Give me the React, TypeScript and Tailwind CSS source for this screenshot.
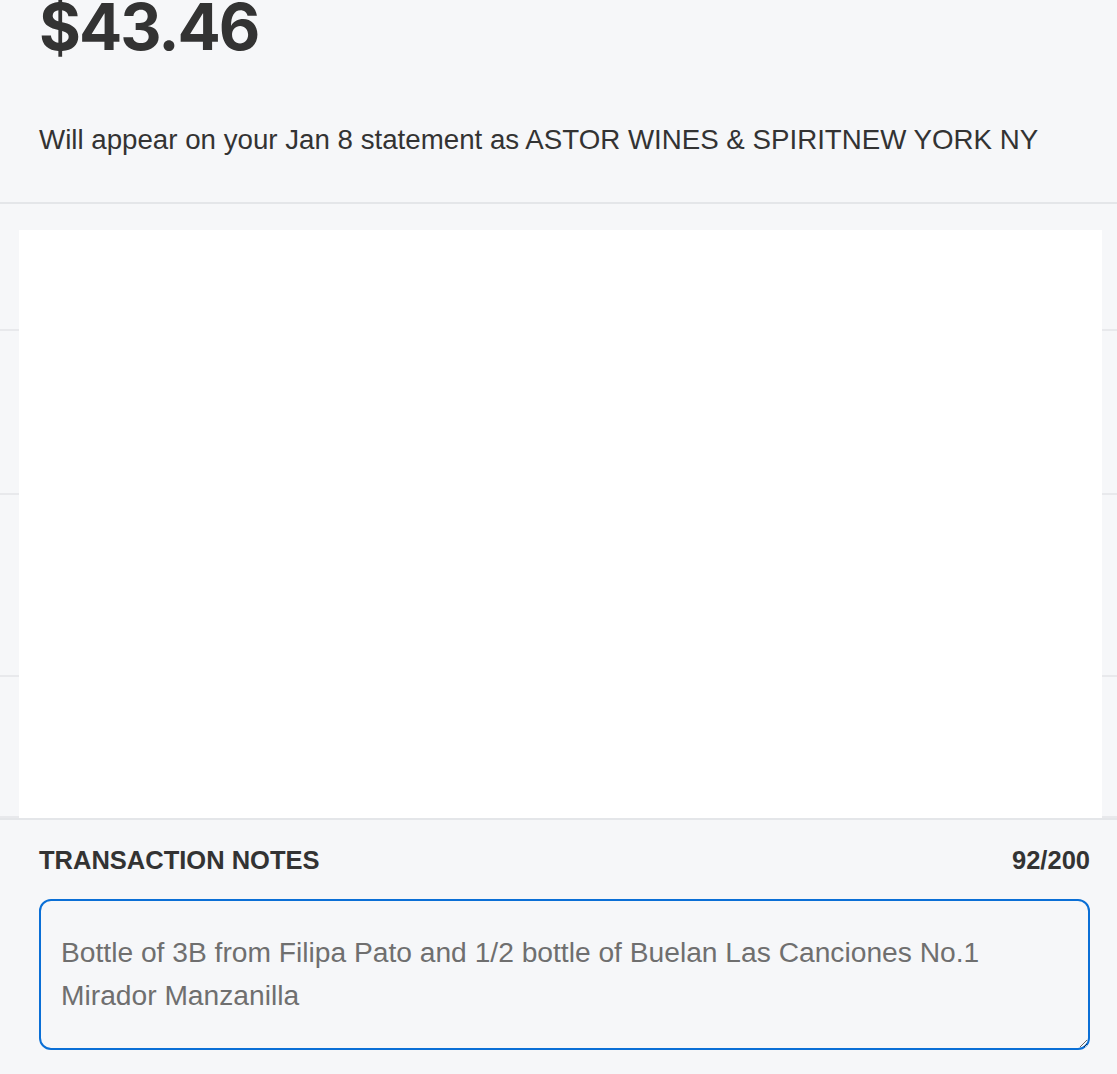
import { useEffect, useRef } from 'react';

const rows = [101, 164, 182, 141];

const App = () => {
  const noteRef = useRef<HTMLTextAreaElement>(null);
  const note = 'Bottle of 3B from Filipa Pato and 1/2 bottle of Buelan Las Canciones No.1 Mirador Manzanilla';

  useEffect(() => {
    const el = noteRef.current;
    if (el) {
      el.focus();
      el.setSelectionRange(note.length, note.length);
    }
  }, []);

  return (
    <div className="min-h-screen bg-[#f6f7f9] text-[#333333] font-['Liberation_Sans',Arial,sans-serif] overflow-hidden">
      <div className="pl-[39px] pr-[27px] border-b-2 border-[#e4e6e9]">
        <h1 className="-mt-[5px] text-[64px] leading-none font-bold font-['Inter',sans-serif] tracking-[-2px]">$43.46</h1>
        <p className="mt-[67px] pb-[48px] text-[27.7px] leading-[28px] whitespace-nowrap">
          Will appear on your Jan 8 statement as ASTOR WINES &amp; SPIRITNEW YORK NY
        </p>
      </div>

      <div className="relative">
        <div className="pt-[26px]">
          {rows.map((h, i) => (
            <div key={i} className="border-b-2 border-[#e8e9ec]" style={{ height: h }} />
          ))}
        </div>
        <div className="absolute left-[19px] right-[15px] top-[26px] bottom-0 bg-white" />
      </div>

      <div className="border-t-2 border-[#e4e6e9] pl-[39px] pr-[27px] pt-[25px]">
        <div className="flex items-center justify-between">
          <span className="text-[25.5px] leading-[30px] font-bold">TRANSACTION NOTES</span>
          <span className="text-[25.5px] leading-[30px] font-bold">92/200</span>
        </div>
        <textarea
          ref={noteRef}
          defaultValue={note}
          className="mt-[24px] block w-full h-[151px] rounded-[12px] border-2 border-[#0a6fd6] bg-[#f6f7f9] pl-[20px] pr-[30px] pt-[30px] text-[28.2px] leading-[43px] text-[#6f6f6f] caret-[#8ab8f5] outline-none resize-y"
        />
      </div>
    </div>
  );
};

export default App;
